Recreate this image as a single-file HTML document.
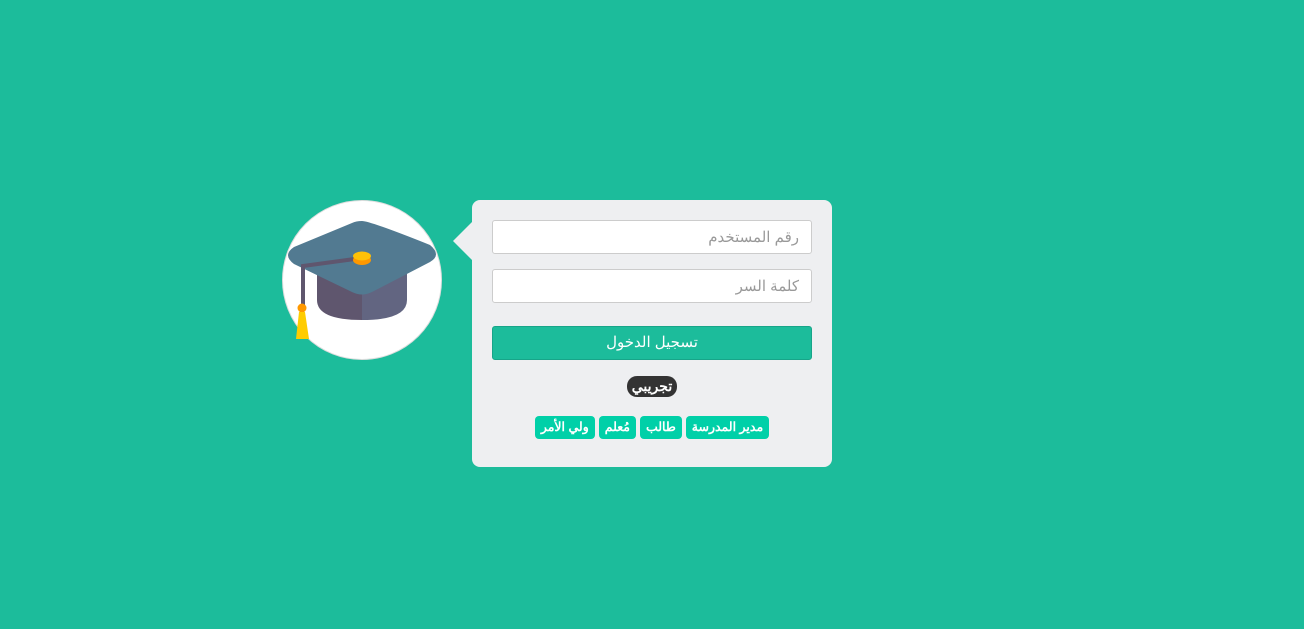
<!DOCTYPE html>
<html><head><meta charset="utf-8"><style>
body{margin:0;width:1304px;height:629px;background:#1cbc9b;font-family:"Liberation Sans","Noto Sans CJK SC",sans-serif;position:relative;overflow:hidden}
.card{position:absolute;left:472px;top:200px;width:360px;height:267px;background:#eeeff1;border-radius:8px}
.arrow{position:absolute;left:453px;top:222px;width:0;height:0;border-top:19px solid transparent;border-bottom:19px solid transparent;border-right:19px solid #eeeff1}
.inp{position:absolute;left:20px;width:318px;height:32px;background:#fff;border:1px solid #ccc;border-radius:3px;direction:rtl;box-sizing:content-box}
.inp span{position:absolute;right:12px;top:7px;font-size:15px;color:#999}
.btn{position:absolute;left:20px;top:126px;width:318px;height:32px;background:#1cbc9b;border:1px solid #17a589;border-radius:3px;color:#fff;text-align:center;font-size:15px;line-height:32px}
.badge{position:absolute;left:155px;top:176px;width:50px;height:21px;background:#333;border-radius:10px;color:#fff;font-weight:bold;font-size:14px;text-align:center;line-height:21px}
.tags{position:absolute;left:0;right:0;top:216px;text-align:center;direction:rtl;font-size:0}
.tags span{display:inline-block;background:#00d0a8;color:#fff;font-weight:bold;font-size:12.5px;height:23px;line-height:23px;padding:0 6px;border-radius:4px;margin:0 2px}
</style></head><body>
<svg style="position:absolute;left:282px;top:200px" width="160" height="160" viewBox="282 200 160 160">
<circle cx="362" cy="280" r="79.5" fill="#fff" stroke="#ddd"/>
<path d="M317 268 L317 300 Q317 320 362 320 L362 268Z" fill="#5f566e"/>
<path d="M362 268 L407 268 L407 300 Q407 320 362 320Z" fill="#626581"/>
<path d="M362 221 Q370 221 430 245 Q442 255 430 262 L372 292 Q362 297 352 292 L294 264 Q282 255 294 247 L352 223 Q356 221 362 221Z" fill="#527a91"/>
<path d="M362 258 L303 266 L303 305" fill="none" stroke="#5f566e" stroke-width="4"/>
<ellipse cx="362" cy="260" rx="9" ry="5" fill="#ff9800"/>
<ellipse cx="362" cy="256" rx="9" ry="4.5" fill="#ffc107"/>
<circle cx="302" cy="308" r="4.5" fill="#ff9800"/>
<path d="M299 312 L305 312 L309 339 L296 339Z" fill="#ffcc00"/>
</svg>
<div class="arrow"></div>
<div class="card">
<div class="inp" style="top:20px"><span>رقم المستخدم</span></div>
<div class="inp" style="top:69px"><span>كلمة السر</span></div>
<div class="btn">تسجيل الدخول</div>
<div class="badge">تجريبي</div>
<div class="tags"><span>مدير المدرسة</span><span>طالب</span><span>مُعلم</span><span>ولي الأمر</span></div>
</div>
</body></html>
